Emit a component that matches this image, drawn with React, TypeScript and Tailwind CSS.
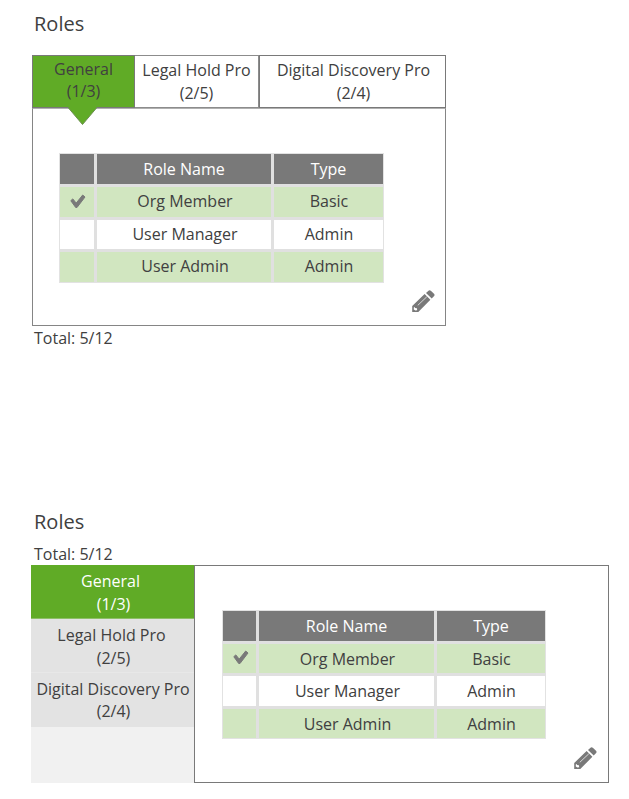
import React from "react";

type Role = { name: string; type: string; assigned?: boolean };

const roles: Role[] = [
  { name: "Org Member", type: "Basic", assigned: true },
  { name: "User Manager", type: "Admin" },
  { name: "User Admin", type: "Admin" },
];

function Check() {
  return (
    <svg className="mb-[2px] ml-[2px] h-[15px] w-[16px]" viewBox="0 0 16 15" fill="#797979" stroke="#797979" strokeWidth="1" strokeLinejoin="round">
      <path d="M.8 6.7 2.8 4.9 6.2 9.1 12.7 1 15 3 7 13.5 5.7 13.5Z" />
    </svg>
  );
}

function Pencil() {
  return (
    <svg className="h-6 w-6" viewBox="0 0 24 24" fill="#797979">
      <path d="M15 4 17.2 1.9Q18.5.7 19.8 1.8L23 4.8Q24.1 6 22.9 7.2L20.7 9.5Z" />
      <path
        fillRule="evenodd"
        d="M13.6 5 19.4 10.7 7.3 23.1H1.2V17ZM2.8 18.4V20.6L4.4 21.6 6.2 21.2 5.9 19.3 4 18.9 3.8 17.9Z"
      />
      <path d="M6.8 16.3 15.8 7.8" stroke="#fff" strokeWidth="0.7" />
    </svg>
  );
}

function RoleTable({ grid, header }: { grid: string; header: string }) {
  return (
    <div className={`grid shrink-0 gap-[3px] border border-[#e2e2e2] bg-[#e0e0e0] text-center ${grid}`}>
      <div className="bg-[#797979]" />
      <div className={`bg-[#797979] text-white ${header}`}>Role Name</div>
      <div className={`bg-[#797979] text-white ${header}`}>Type</div>
      {roles.map((r, i) => {
        const bg = i % 2 === 0 ? "bg-[#d1e6c0]" : "bg-white";
        return (
          <React.Fragment key={r.name}>
            <div className={`flex items-center justify-center ${bg}`}>{r.assigned && <Check />}</div>
            <div className={`pl-[2px] ${bg}`}>{r.name}</div>
            <div className={`pl-px ${bg}`}>{r.type}</div>
          </React.Fragment>
        );
      })}
    </div>
  );
}

export default function App() {
  return (
    <div className="h-[799px] w-[629px] overflow-hidden bg-white font-['Open_Sans',sans-serif] text-base text-[#404040]">
      <section className="h-[508px] pl-8 pt-[10px]">
        <h2 className="pl-[2px] text-xl leading-[27px]">Roles</h2>
        <div className="mt-[18px] w-[414px]">
          <div className="flex h-[53px] text-center leading-[23px]">
            <div className="relative w-[103px] border border-[#797979] bg-[#60ab26] pt-[2px] leading-[22px]">
              General
              <br />
              (1/3)
              <svg className="absolute left-[34px] top-[50px] z-10 h-[20px] w-[32px]" viewBox="0 0 32 20">
                <path d="M1.5 0V2L15.5 18.5 29.5 2V0Z" fill="#60ab26" />
                <path d="M1.5 2 15.5 18.5 29.5 2" fill="none" stroke="#6c8f50" />
              </svg>
            </div>
            <div className="w-[124px] border-y border-r border-[#8c8c8c] pt-[3px]">
              Legal Hold Pro
              <br />
              (2/5)
            </div>
            <div className="w-[187px] border border-[#797979] pl-[2px] pt-[3px]">
              Digital Discovery Pro
              <br />
              (2/4)
            </div>
          </div>
          <div className="flex h-[218px] flex-col border border-[#858585] border-t-[#b0b0b0] pl-[26px] pt-[44px]">
            <RoleTable
              grid="w-[325px] grid-cols-[34px_174px_109px] grid-rows-[30px_30px_29px_30px] leading-[29px]"
              header="leading-[31px]"
            />
            <div className="mt-[6px] flex justify-end pr-[10px]">
              <Pencil />
            </div>
          </div>
        </div>
        <p className="pl-[2px] leading-6">Total: 5/12</p>
      </section>
      <section className="pl-[31px]">
        <h2 className="pl-[3px] text-xl leading-[27px]">Roles</h2>
        <p className="mt-[7px] h-[23px] pl-[3px] leading-6">Total: 5/12</p>
        <div className="flex h-[218px] w-[578px]">
          <div className="w-[163px] bg-[#f1f1f1] text-center leading-[23px]">
            <div className="h-[54px] border-b border-[#8ebf67] bg-[#60ab26] pt-[5px] text-white">
              <span className="block pr-[4px]">General</span>
              <span className="block pl-[2px]">(1/3)</span>
            </div>
            <div className="h-[54px] border-b border-[#e8e8e8] bg-[#e3e3e3] pt-[5px]">
              <span className="block pr-[2px]">Legal Hold Pro</span>
              <span className="block pl-[2px]">(2/5)</span>
            </div>
            <div className="h-[54px] whitespace-nowrap bg-[#e3e3e3] pt-[5px]">
              <span className="block pl-px">Digital Discovery Pro</span>
              <span className="block pl-[2px] leading-[21px]">(2/4)</span>
            </div>
          </div>
          <div className="flex flex-1 flex-col border border-[#797979] pl-[27px] pt-[44px]">
            <RoleTable
              grid="w-[324px] grid-cols-[33px_175px_108px] grid-rows-[30px_29px_30px_29px] leading-[31px]"
              header="leading-[31px]"
            />
            <div className="mt-[7px] flex justify-end pr-[11px]">
              <Pencil />
            </div>
          </div>
        </div>
      </section>
    </div>
  );
}
